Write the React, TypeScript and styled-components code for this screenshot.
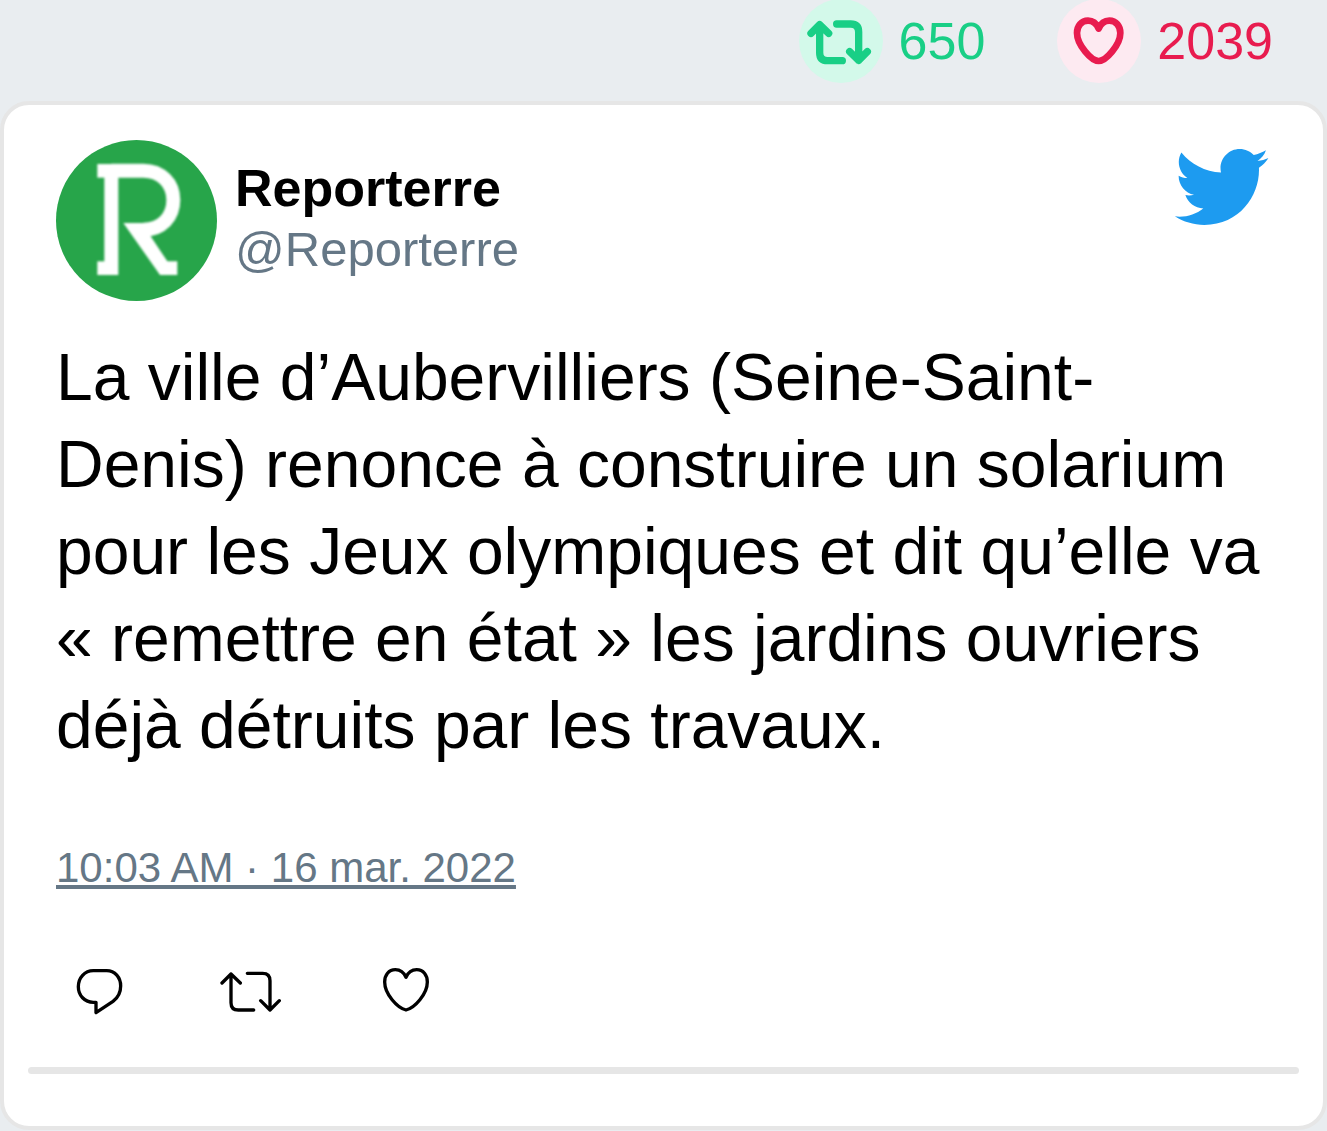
import React from "react";
import styled, { createGlobalStyle } from "styled-components";

const GlobalStyle = createGlobalStyle`
  * { box-sizing: border-box; }
  body {
    margin: 0;
    background: #e9edf0;
    color: #000;
    font-family: "Liberation Sans", Arial, sans-serif;
  }
`;

const Page = styled.main`
  display: flex;
  flex-direction: column;
`;

const Stats = styled.header`
  display: flex;
  justify-content: flex-end;
  gap: 72px;
  padding: 0 54px 19px 0;
`;

const Stat = styled.div<{ $color: string }>`
  display: flex;
  align-items: center;
  gap: 16px;
  height: 82px;
  font-size: 52px;
  line-height: 60px;
  color: ${(p) => p.$color};
`;

const Badge = styled.span<{ $tint: string }>`
  display: flex;
  width: 84px;
  height: 84px;
  border-radius: 50%;
  background: ${(p) => p.$tint};
`;

const Icon = styled.svg`
  display: block;
  fill: none;
  stroke: currentColor;
  stroke-linecap: round;
  stroke-linejoin: round;
`;

const Card = styled.article`
  display: flex;
  flex-direction: column;
  padding: 35px 24px 52px;
  border: 4px solid #e6e6e6;
  border-radius: 29px;
  background: #fff;
`;

const Author = styled.div`
  display: flex;
  align-items: flex-start;
  gap: 18px;
  padding: 0 29px 0 28px;
`;

const Avatar = styled.svg`
  display: block;
  flex: none;
  border-radius: 50%;
  background: #27a54a;
`;

const Mark = styled.g`
  fill: #fff;
  filter: blur(3px);
`;

const Names = styled.a`
  display: flex;
  flex-direction: column;
  flex: 1;
  padding-top: 18px;
  color: #657786;
  font-size: 49px;
  line-height: 61px;
  text-decoration: none;
`;

const Name = styled.strong`
  color: #000;
  font-size: 52px;
`;

const Bird = styled.svg`
  display: block;
  flex: none;
  fill: #1d9bf0;
`;

const Message = styled.p`
  margin: 33px 0 0;
  padding: 0 28px;
  font-size: 66px;
  line-height: 87px;
`;

const Timestamp = styled.a`
  align-self: flex-start;
  margin: 75px 0 0 28px;
  color: #657786;
  font-size: 42px;
  line-height: 48px;
`;

const Actions = styled.div`
  display: grid;
  grid-template-columns: 142px 164px 48px;
  justify-items: start;
  margin-top: 76px;
  padding-left: 48px;
`;

const Action = styled.button`
  padding: 0;
  border: 0;
  background: none;
  color: #000;
  cursor: pointer;
`;

const Divider = styled.hr`
  width: 100%;
  height: 7px;
  margin: 51px 0 0;
  border: 0;
  border-radius: 4px;
  background: #e6e6e6;
`;

export default function App() {
  return (
    <Page>
      <GlobalStyle />
      <Stats>
        <Stat $color="#19cf86">
          <Badge $tint="#d3f9ea">
            <Icon width="84" height="84" viewBox="0 0 252 252" strokeWidth="22" aria-label="Retweets">
              <path d="M130 185H86Q62 185 62 161V78M36 103L62 77L89 103M113 75H155Q179 75 179 99V184M152 158L179 184L205 158" />
            </Icon>
          </Badge>
          <span>650</span>
        </Stat>
        <Stat $color="#e81c4f">
          <Badge $tint="#fdeaf1">
            <Icon width="84" height="84" viewBox="0 0 252 252" strokeWidth="20" aria-label="J’aime">
              <path d="M125 89C119 75 108 65 93 65C73 65 60 81 60 102C60 137 103 186 125 186C147 186 190 137 190 102C190 81 177 65 157 65C142 65 131 75 125 89Z" />
            </Icon>
          </Badge>
          <span>2039</span>
        </Stat>
      </Stats>

      <Card>
        <Author>
          <Avatar width="161" height="161" viewBox="0 0 483 483" role="img" aria-label="Logo Reporterre">
            <Mark>
              <rect x="145" y="72" width="42" height="333" />
              <rect x="124" y="72" width="42" height="41" />
              <rect x="124" y="364" width="42" height="41" />
              <path
                d="M166 92H262C315 92 352 130 352 180C352 230 318 269 262 269"
                fill="none"
                stroke="#fff"
                strokeWidth="42"
              />
              <path d="M202 249H272L282 286L334 364H364V405H312Z" />
            </Mark>
          </Avatar>
          <Names href="#reporterre">
            <Name>Reporterre</Name>
            <span>@Reporterre</span>
          </Names>
          <Bird width="99" height="99" viewBox="0 0.6 24 24" role="img" aria-label="Twitter">
            <path d="M23.643 4.937c-.835.37-1.732.62-2.675.733.962-.576 1.7-1.49 2.048-2.578-.9.534-1.897.922-2.958 1.13-.85-.904-2.06-1.47-3.4-1.47-2.572 0-4.658 2.086-4.658 4.66 0 .364.042.718.12 1.06-3.873-.195-7.304-2.05-9.602-4.868-.4.69-.63 1.49-.63 2.342 0 1.616.823 3.043 2.072 3.878-.764-.025-1.482-.234-2.11-.583v.06c0 2.257 1.605 4.14 3.737 4.568-.392.106-.803.162-1.227.162-.3 0-.593-.028-.877-.082.593 1.85 2.313 3.198 4.352 3.234-1.595 1.25-3.604 1.995-5.786 1.995-.376 0-.747-.022-1.112-.065 2.062 1.323 4.51 2.093 7.14 2.093 8.57 0 13.255-7.098 13.255-13.254 0-.2-.005-.402-.014-.602.91-.658 1.7-1.477 2.323-2.41z" />
          </Bird>
        </Author>

        <Message>
          La ville d’Aubervilliers (Seine-Saint-Denis) renonce à construire un
          solarium pour les Jeux olympiques et dit qu’elle va «&nbsp;remettre en
          état&nbsp;» les jardins ouvriers déjà détruits par les travaux.
        </Message>

        <Timestamp href="#tweet">10:03 AM · 16 mar. 2022</Timestamp>

        <Actions>
          <Action type="button" aria-label="Répondre">
            <Icon width="48" height="48" viewBox="0 0 144 144" strokeWidth="10">
              <path d="M52 8H92C117 8 134 29 134 54C134 73 126 89 111 100L60 134V103H52C26 103 7 82 7 56C7 29 26 8 52 8Z" />
            </Icon>
          </Action>
          <Action type="button" aria-label="Retweeter">
            <Icon width="64" height="48" viewBox="0 0 192 144" strokeWidth="10">
              <path d="M107 126H61Q39 126 39 104V18M12 45L39 18L67 45M88 16H134Q156 16 156 38V126M128 98L156 126L184 98" />
            </Icon>
          </Action>
          <Action type="button" aria-label="Aimer">
            <Icon width="48" height="48" viewBox="0 0 144 144" strokeWidth="10">
              <path d="M72 28C66 14 55 5 40 5C20 5 8 21 8 42C8 78 46 120 72 126C98 120 136 78 136 42C136 21 124 5 104 5C89 5 78 14 72 28Z" />
            </Icon>
          </Action>
        </Actions>

        <Divider />
      </Card>
    </Page>
  );
}
